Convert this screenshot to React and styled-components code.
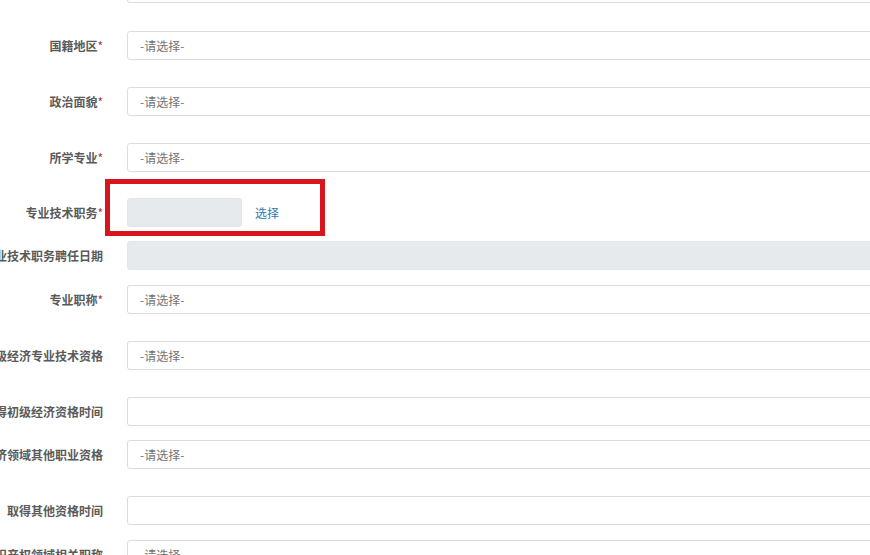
import React from "react";
import styled, { createGlobalStyle } from "styled-components";

const GlobalStyle = createGlobalStyle`
  html, body {
    margin: 0;
    padding: 0;
    background: #ffffff;
    overflow: hidden;
  }
  body {
    font-family: "Noto Sans CJK SC", "Microsoft YaHei", sans-serif;
  }
`;

// form rows, top to bottom; gap is the space below the row's input.
// the first row sits above the frame, only its input's lower edge shows
const rows = [
  { label: "", kind: "text", gap: 28 },
  { label: "国籍地区", required: true, kind: "select", gap: 27 },
  { label: "政治面貌", required: true, kind: "select", gap: 27 },
  { label: "所学专业", required: true, kind: "select", gap: 26 },
  { label: "专业技术职务", required: true, kind: "picker", gap: 14 },
  { label: "专业技术职务聘任日期", kind: "disabled", gap: 15 },
  { label: "专业职称", required: true, kind: "select", gap: 27 },
  { label: "初级经济专业技术资格", kind: "select", gap: 27 },
  { label: "取得初级经济资格时间", kind: "text", gap: 14 },
  { label: "经济领域其他职业资格", kind: "select", gap: 27 },
  { label: "取得其他资格时间", kind: "text", gap: 15 },
  { label: "知识产权领域相关职称", kind: "select", gap: 15 },
];

export default function App() {
  return (
    <>
      <GlobalStyle />
      <Form>
        {rows.map((row, index) => (
          <Row key={index} $gap={row.gap}>
            <Label>
              <LabelText>
                {row.label}
                {row.required ? <Star>*</Star> : null}
              </LabelText>
            </Label>
            {row.kind === "select" && (
              <Input>
                <Placeholder>-请选择-</Placeholder>
              </Input>
            )}
            {row.kind === "text" && <Input />}
            {row.kind === "disabled" && <Input $disabled />}
            {row.kind === "picker" && (
              <Picker>
                <SmallInput />
                <PickLink>选择</PickLink>
                <Highlight />
              </Picker>
            )}
          </Row>
        ))}
      </Form>
    </>
  );
}

const Form = styled.div`
  display: flex;
  flex-direction: column;
  margin-top: -26px;
  width: 960px;
`;

const Row = styled.div`
  display: flex;
  align-items: center;
  height: 29px;
  margin-bottom: ${(props) => props.$gap}px;
`;

const Label = styled.div`
  width: 103px;
  flex-shrink: 0;
  margin-right: 24px;
  display: flex;
  justify-content: flex-end;
  overflow: visible;
`;

const LabelText = styled.span`
  white-space: nowrap;
  font-size: 12px;
  font-weight: 700;
  color: #5a5a5a;
  line-height: 16px;
`;

const Star = styled.span`
  color: #a8383d;
  font-weight: 400;
`;

const Input = styled.div`
  flex: 1;
  height: 29px;
  box-sizing: border-box;
  border: 1px solid ${(props) => (props.$disabled ? "#e3e6e9" : "#dcdcdc")};
  border-radius: 3px;
  background: ${(props) => (props.$disabled ? "#e7eaed" : "#ffffff")};
  display: flex;
  align-items: center;
  padding-left: 12px;
`;

const Placeholder = styled.span`
  font-size: 12px;
  color: #737373;
  white-space: nowrap;
`;

const Picker = styled.div`
  position: relative;
  display: flex;
  align-items: center;
  height: 29px;
`;

const SmallInput = styled.div`
  width: 115px;
  height: 29px;
  box-sizing: border-box;
  border: 1px solid #e3e6e9;
  border-radius: 3px;
  background: #e7eaed;
`;

const PickLink = styled.span`
  margin-left: 13px;
  font-size: 12px;
  color: #3279b0;
  cursor: pointer;
`;

// red annotation frame drawn over the picker field
const Highlight = styled.div`
  position: absolute;
  left: -22px;
  top: -19px;
  width: 220px;
  height: 57px;
  box-sizing: border-box;
  border: 5px solid #d8141c;
  pointer-events: none;
`;
